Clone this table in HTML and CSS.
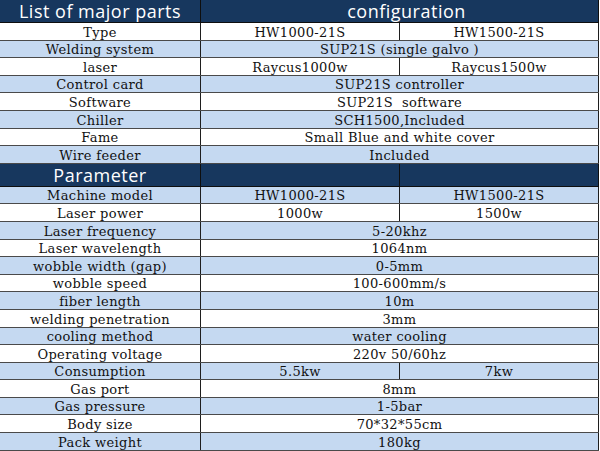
FILE: index.html
```html
<!DOCTYPE html>
<html>
<head>
<meta charset="utf-8">
<link rel="stylesheet" href="styles.css">
</head>
<body>
<table class="spec">
  <colgroup><col class="c1"><col class="c2"><col class="c3"></colgroup>
  <tr class="head"><td>List of major parts</td><td colspan="2" class="shift">configuration</td></tr>
  <tr class="w"><td>Type</td><td>HW1000-21S</td><td>HW1500-21S</td></tr>
  <tr class="b"><td>Welding system</td><td colspan="2">SUP21S (single galvo )</td></tr>
  <tr class="w"><td>laser</td><td>Raycus1000w</td><td>Raycus1500w</td></tr>
  <tr class="b"><td>Control card</td><td colspan="2">SUP21S controller</td></tr>
  <tr class="w"><td>Software</td><td colspan="2">SUP21S&nbsp; software</td></tr>
  <tr class="b"><td>Chiller</td><td colspan="2">SCH1500,Included</td></tr>
  <tr class="w"><td>Fame</td><td colspan="2">Small Blue and white cover</td></tr>
  <tr class="b"><td>Wire feeder</td><td colspan="2">Included</td></tr>
  <tr class="head"><td>Parameter</td><td></td><td></td></tr>
  <tr class="b"><td>Machine model</td><td>HW1000-21S</td><td>HW1500-21S</td></tr>
  <tr class="w"><td>Laser power</td><td class="open">1000w</td><td>1500w</td></tr>
  <tr class="b"><td>Laser frequency</td><td colspan="2">5-20khz</td></tr>
  <tr class="w"><td>Laser wavelength</td><td colspan="2">1064nm</td></tr>
  <tr class="b"><td>wobble width (gap)</td><td colspan="2">0-5mm</td></tr>
  <tr class="w"><td>wobble speed</td><td colspan="2">100-600mm/s</td></tr>
  <tr class="b"><td>fiber length</td><td colspan="2">10m</td></tr>
  <tr class="w"><td>welding penetration</td><td colspan="2">3mm</td></tr>
  <tr class="b"><td>cooling method</td><td colspan="2">water cooling</td></tr>
  <tr class="w"><td>Operating voltage</td><td colspan="2">220v 50/60hz</td></tr>
  <tr class="b"><td>Consumption</td><td>5.5kw</td><td>7kw</td></tr>
  <tr class="w"><td>Gas port</td><td colspan="2">8mm</td></tr>
  <tr class="b"><td>Gas pressure</td><td colspan="2">1-5bar</td></tr>
  <tr class="w"><td>Body size</td><td colspan="2">70*32*55cm</td></tr>
  <tr class="b"><td>Pack weight</td><td colspan="2">180kg</td></tr>
</table>
</body>
</html>
```
FILE: styles.css
```css
html, body {
  margin: 0;
  padding: 0;
  background: #ffffff;
}
.spec {
  border-collapse: collapse;
  table-layout: fixed;
  width: 599px;
  margin-left: -1px;
  font-family: "DejaVu Serif", serif;
  font-size: 13px;
  letter-spacing: 0.35px;
  color: #111;
}
.c1 { width: 201px; }
.c2 { width: 199px; }
.c3 { width: 199px; }
.spec td {
  padding: 0;
  text-align: center;
  vertical-align: bottom;
  line-height: 15px;
  white-space: nowrap;
  overflow: hidden;
  border-top: 1px solid #4a4a4a;
  border-bottom: 1px solid #4a4a4a;
  border-left: 1px solid #1e1e1e;
  border-right: 1px solid #1e1e1e;
}
.spec tr { height: 17.6px; }
.spec tr.w td { background: #ffffff; }
.spec tr.b td { background: #c5d9f1; }
.spec tr.head { height: 22px; }
.spec tr.head td {
  background: #17375e;
  color: #ffffff;
  font-family: "Open Sans", "Liberation Sans", sans-serif;
  font-size: 18px;
  line-height: 22px;
  letter-spacing: 0.5px;
  border-top: none;
  border-color: #0e0e0e;
}
.spec tr.head td.shift { padding-left: 14px; }
.spec tr:first-child td { border-top: none; }
.spec td.open { border-right: none; }
```
